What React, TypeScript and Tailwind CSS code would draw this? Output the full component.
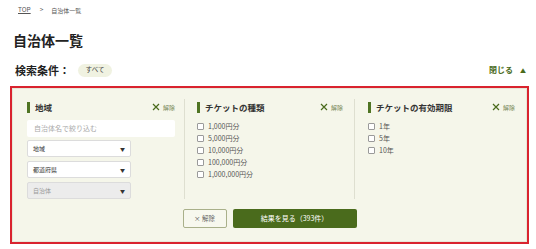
import React from 'react';

const font = "font-['Noto_Sans_CJK_JP','Noto_Sans',sans-serif]";

const ClearLink = () => (
  <div className="flex items-center gap-[3px]">
    <svg width="8" height="8" viewBox="0 0 8 8" className="text-[#4a6b1c]">
      <path d="M1 1 L7 7 M7 1 L1 7" stroke="currentColor" strokeWidth="1.2" />
    </svg>
    <span className="text-[6px] text-[#7a8a5a]">解除</span>
  </div>
);

const Heading = ({ title }: { title: string }) => (
  <div className="flex items-center justify-between h-[12px]">
    <div className="flex items-center">
      <span className="w-[3px] h-[11px] bg-[#4f7423]" />
      <span className="ml-[5px] text-[8.5px] font-bold text-[#333] leading-none">{title}</span>
    </div>
    <ClearLink />
  </div>
);

const Check = ({ label }: { label: string }) => (
  <div className="flex items-center h-[12px]">
    <span className="w-[7px] h-[7px] border border-[#9a9a9a] bg-white rounded-[1px]" />
    <span className="ml-[4px] text-[7px] text-[#555] leading-none">{label}</span>
  </div>
);

const Select = ({ label, disabled }: { label: string; disabled?: boolean }) => (
  <div
    className={`w-[104px] h-[17px] flex items-center justify-between px-[5px] border border-[#dcdcdc] rounded-[2px] ${
      disabled ? 'bg-[#ececec] text-[#999]' : 'bg-white text-[#333]'
    }`}
  >
    <span className="text-[6px] leading-none">{label}</span>
    <span className="text-[5px] text-[#333] leading-none">▼</span>
  </div>
);

export default function App() {
  const tickets = ['1,000円分', '5,000円分', '10,000円分', '100,000円分', '1,000,000円分'];
  const terms = ['1年', '5年', '10年'];

  return (
    <div className={`w-[536px] h-[249px] bg-white text-[#333] ${font}`}>
      <div className="h-[20px] flex items-center pl-[18px] text-[6.5px] text-[#555]">
        <span className="underline">TOP</span>
        <span className="ml-[9px]">&gt;</span>
        <span className="ml-[8px] text-[6px]">自治体一覧</span>
      </div>

      <h1 className="mt-[11px] pl-[13px] h-[18px] leading-[18px] text-[14px] font-bold text-[#222]">自治体一覧</h1>

      <div className="mt-[14px] h-[14px] flex items-center justify-between pl-[15px] pr-[10px]">
        <div className="flex items-center">
          <span className="text-[11px] font-bold text-[#222]">検索条件：</span>
          <span className="ml-[8px] w-[34px] h-[13px] rounded-full bg-[#f0f2e1] flex items-center justify-center text-[6.5px] text-[#444]">
            すべて
          </span>
        </div>
        <div className="flex items-center text-[#4a6b1c] font-bold">
          <span className="text-[8px]">閉じる</span>
          <span className="ml-[7px] text-[6px]">▲</span>
        </div>
      </div>

      <div className="mt-[9px] ml-[10px] w-[519px] h-[158px] border-2 border-[#d9232e]">
        <div className="h-full bg-[#f5f6ea] border border-[#e6e7d8] pt-[10px] pl-[14px] pr-[11px]">
          <div className="flex h-[100px]">
            <div className="w-[157px] pr-[9px] pt-[2px]">
              <Heading title="地域" />
              <div className="mt-[7px] h-[17px] bg-white rounded-[2px] flex items-center px-[7px] text-[7px] text-[#aaa]">
                自治体名で絞り込む
              </div>
              <div className="mt-[3px] flex flex-col gap-[4px]">
                <Select label="地域" />
                <Select label="都道府県" />
                <Select label="自治体" disabled />
              </div>
            </div>

            <div className="w-[170px] border-l border-[#dedfd0] pl-[12px] pr-[11px] pt-[2px]">
              <Heading title="チケットの種類" />
              <div className="mt-[7px]">
                {tickets.map((t) => (
                  <Check key={t} label={t} />
                ))}
              </div>
            </div>

            <div className="flex-1 border-l border-[#dedfd0] pl-[13px] pt-[2px]">
              <Heading title="チケットの有効期限" />
              <div className="mt-[7px]">
                {terms.map((t) => (
                  <Check key={t} label={t} />
                ))}
              </div>
            </div>
          </div>

          <div className="mt-[10px] flex justify-center gap-[6px] pr-[3px]">
            <button className="w-[44px] h-[19px] border border-[#a9b08a] bg-[#f7f8ee] rounded-[2px] text-[6.5px] text-[#666] flex items-center justify-center">
              × 解除
            </button>
            <button className="w-[124px] h-[19px] bg-[#4a6b1c] rounded-[2px] text-[7px] text-white flex items-center justify-center">
              結果を見る（393件）
            </button>
          </div>
        </div>
      </div>
    </div>
  );
}
